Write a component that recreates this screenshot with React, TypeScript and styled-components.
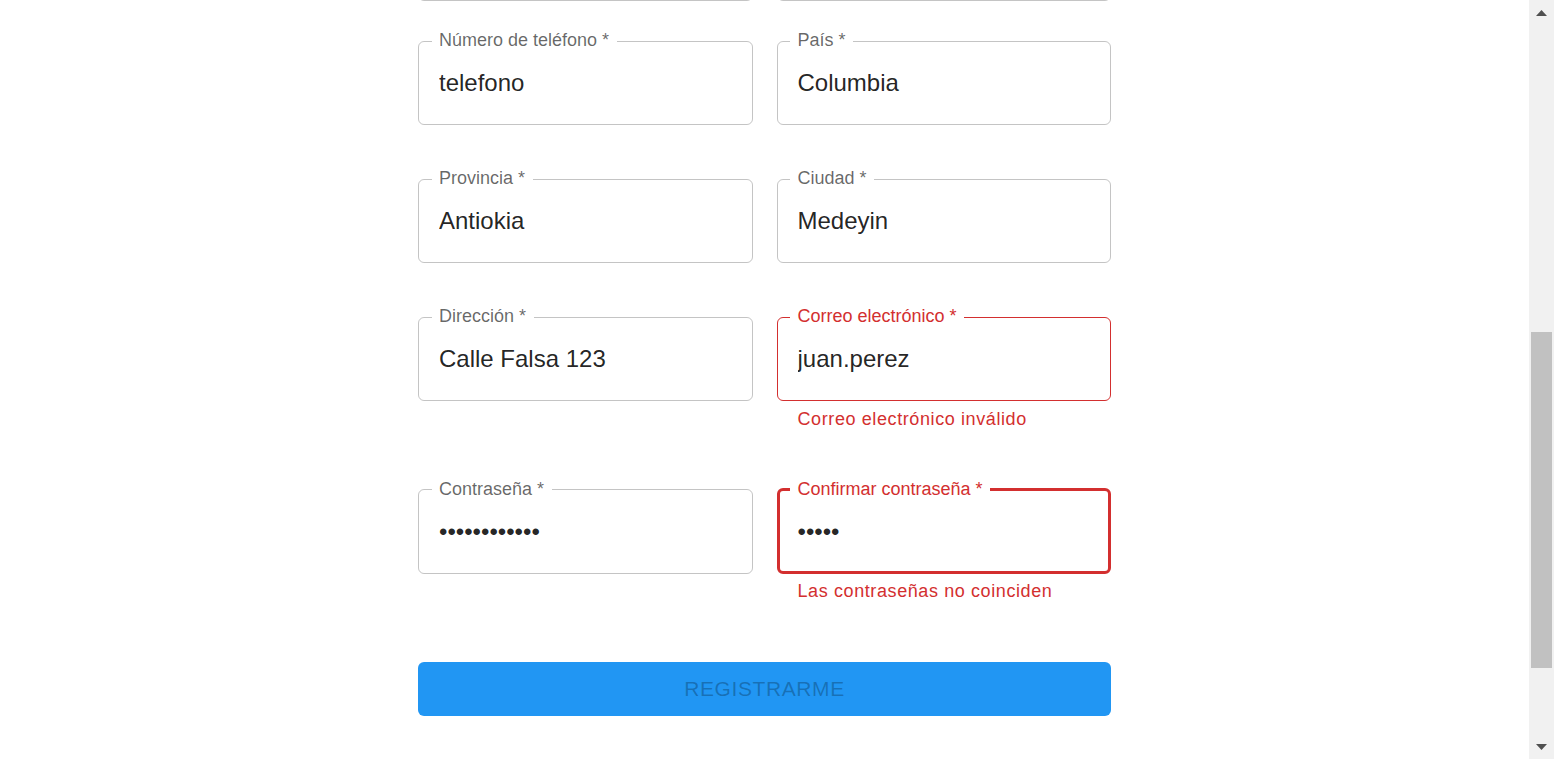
import React from "react";
import styled, { createGlobalStyle } from "styled-components";

const GlobalStyle = createGlobalStyle`
  html, body {
    margin: 0;
    padding: 0;
    overflow: hidden;
    background: #ffffff;
    font-family: "Liberation Sans", Arial, Helvetica, sans-serif;
  }
  * { box-sizing: border-box; }
`;

const ERROR = "#d32f2f";

const Page = styled.div`
  display: flex;
  height: 100vh;
  overflow: hidden;
`;

const Main = styled.main`
  flex: 1;
  min-width: 0;
  overflow: hidden;
  background: #ffffff;
`;

const Form = styled.form`
  width: 693px;
  margin: -97px auto 0;
  display: flex;
  flex-direction: column;
`;

const Row = styled.div<{ $after: number }>`
  display: grid;
  grid-template-columns: 1fr 1fr;
  column-gap: 24px;
  align-items: start;
  margin-bottom: ${(p) => p.$after}px;
`;

const Field = styled.div`
  display: flex;
  flex-direction: column;
  min-width: 0;
`;

const Outline = styled.fieldset<{ $error?: boolean; $focused?: boolean }>`
  margin: 0;
  min-width: 0;
  height: 98px;
  padding: 0 ${(p) => (p.$focused ? 10.5 : 12.5)}px;
  border-style: solid;
  border-width: ${(p) => (p.$focused ? 3 : 1)}px;
  border-color: ${(p) => (p.$error ? ERROR : "rgba(0, 0, 0, 0.23)")};
  border-radius: 6px;
`;

const Label = styled.legend<{ $error?: boolean }>`
  padding: 2px 7.5px 4px;
  font-size: 18px;
  line-height: 22px;
  color: ${(p) => (p.$error ? ERROR : "rgba(0, 0, 0, 0.6)")};
  white-space: nowrap;
`;

const Input = styled.input`
  display: block;
  width: 100%;
  height: 34.5px;
  margin: 10.75px 0 0;
  padding: 0 7.5px;
  border: none;
  outline: none;
  background: transparent;
  font-family: "Liberation Sans", Arial, Helvetica, sans-serif;
  font-size: 24px;
  color: rgba(0, 0, 0, 0.87);
`;

const Helper = styled.p`
  margin: 3.5px 21px 0;
  font-size: 18px;
  line-height: 29.88px;
  letter-spacing: 0.6px;
  color: ${ERROR};
`;

const SubmitButton = styled.button`
  display: flex;
  align-items: center;
  justify-content: center;
  height: 54px;
  width: 100%;
  border: none;
  border-radius: 6px;
  background: #2196f3;
  color: rgba(0, 0, 0, 0.26);
  font-family: "Liberation Sans", Arial, Helvetica, sans-serif;
  font-size: 21px;
  letter-spacing: 0.6px;
  text-transform: uppercase;
  margin-bottom: 60px;
`;

const ScrollBar = styled.div`
  width: 25px;
  flex: 0 0 25px;
  display: flex;
  flex-direction: column;
  background: #f1f1f1;
`;

const ArrowButton = styled.div`
  height: 25px;
  flex: 0 0 25px;
  display: flex;
  align-items: center;
  justify-content: center;
`;

const Track = styled.div`
  flex: 1;
  padding: 0 2px;
  overflow: hidden;
`;

const Thumb = styled.div`
  height: 336px;
  background: #c1c1c1;
`;

type FieldProps = {
  label?: string;
  value: string;
  type?: string;
  error?: boolean;
  focused?: boolean;
  helper?: string;
};

function TextField({ label, value, type = "text", error, focused, helper }: FieldProps) {
  return (
    <Field>
      <Outline $error={error} $focused={focused}>
        {label && (
          <Label $error={error}>
            {label}
            {" *"}
          </Label>
        )}
        <Input type={type} value={value} readOnly />
      </Outline>
      {helper && <Helper>{helper}</Helper>}
    </Field>
  );
}

function Arrow({ up }: { up?: boolean }) {
  return (
    <svg width="11" height="6" viewBox="0 0 11 6">
      <polygon points={up ? "0,6 5.5,0 11,6" : "0,0 11,0 5.5,6"} fill="#505050" />
    </svg>
  );
}

export default function App() {
  return (
    <>
      <GlobalStyle />
      <Page>
        <Main>
          <Form onSubmit={(e) => e.preventDefault()}>
            <Row $after={26}>
              <TextField value="" />
              <TextField value="" />
            </Row>
            <Row $after={40}>
              <TextField label="Número de teléfono" value="telefono" />
              <TextField label="País" value="Columbia" />
            </Row>
            <Row $after={40}>
              <TextField label="Provincia" value="Antiokia" />
              <TextField label="Ciudad" value="Medeyin" />
            </Row>
            <Row $after={41.6}>
              <TextField label="Dirección" value="Calle Falsa 123" />
              <TextField
                label="Correo electrónico"
                value="juan.perez"
                error
                helper="Correo electrónico inválido"
              />
            </Row>
            <Row $after={54.6}>
              <TextField label="Contraseña" value="123456789012" type="password" />
              <TextField
                label="Confirmar contraseña"
                value="12345"
                type="password"
                error
                focused
                helper="Las contraseñas no coinciden"
              />
            </Row>
            <SubmitButton type="submit" disabled>
              Registrarme
            </SubmitButton>
          </Form>
        </Main>
        <ScrollBar>
          <ArrowButton>
            <Arrow up />
          </ArrowButton>
          <Track>
            <Thumb style={{ marginTop: 307 }} />
          </Track>
          <ArrowButton>
            <Arrow />
          </ArrowButton>
        </ScrollBar>
      </Page>
    </>
  );
}
